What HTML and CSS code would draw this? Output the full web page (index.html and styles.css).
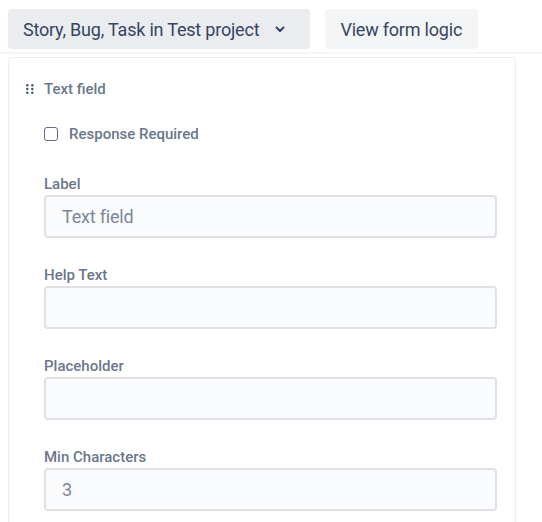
FILE: index.html
```html
<!DOCTYPE html>
<html>
<head>
<meta charset="utf-8">
<link rel="stylesheet" href="styles.css">
</head>
<body>
<div class="toolbar">
  <button class="btn btn-select">Story, Bug, Task in Test project
    <svg class="chev" width="10" height="7" viewBox="0 0 10 7"><path d="M1.5 1.5 L5 5 L8.5 1.5" fill="none" stroke="#344563" stroke-width="2" stroke-linecap="round" stroke-linejoin="round"/></svg>
  </button>
  <button class="btn btn-plain">View form logic</button>
</div>
<div class="card">
  <div class="card-head">
    <svg class="handle" width="8" height="10" viewBox="0 0 8 10"><g fill="#42526e"><circle cx="1.3" cy="1.3" r="1.2"/><circle cx="6.3" cy="1.3" r="1.2"/><circle cx="1.3" cy="5" r="1.2"/><circle cx="6.3" cy="5" r="1.2"/><circle cx="1.3" cy="8.7" r="1.2"/><circle cx="6.3" cy="8.7" r="1.2"/></g></svg>
    <span class="head-title">Text field</span>
  </div>
  <div class="card-body">
    <label class="check-row"><span class="checkbox"></span><span>Response Required</span></label>
    <div class="field">
      <div class="field-label">Label</div>
      <div class="input">Text field</div>
    </div>
    <div class="field">
      <div class="field-label">Help Text</div>
      <div class="input"></div>
    </div>
    <div class="field">
      <div class="field-label">Placeholder</div>
      <div class="input"></div>
    </div>
    <div class="field">
      <div class="field-label">Min Characters</div>
      <div class="input">3</div>
    </div>
  </div>
</div>
</body>
</html>
```
FILE: styles.css
```css
html, body {
  margin: 0;
  padding: 0;
  background: #ffffff;
  font-family: Roboto, "Liberation Sans", sans-serif;
}
.toolbar {
  display: flex;
  gap: 15px;
  padding: 9px 8px 3px;
  border-bottom: 2px solid #f4f5f7;
}
.btn {
  height: 40px;
  border: none;
  border-radius: 4px;
  font-family: Roboto, "Liberation Sans", sans-serif;
  font-size: 18px;
  letter-spacing: -0.2px;
  color: #344563;
  display: flex;
  align-items: center;
  padding: 0 15px;
}
.btn-select {
  background: #ebecf0;
  gap: 16px;
  padding-right: 25px;
}
.btn-plain {
  background: #f4f5f7;
  padding-right: 16px;
}
.chev {
  display: block;
  margin-top: 1px;
}
.card {
  margin: 3px 0 0 8px;
  border: 1px solid #ebecf0;
  border-radius: 4px;
  padding: 21px 0 0 17px;
  box-sizing: border-box;
  width: 508px;
  height: 480px;
}
.card-head {
  display: flex;
  align-items: center;
  gap: 10px;
  height: 20px;
}
.handle {
  display: block;
}
.head-title {
  font-size: 15px;
  font-weight: 500;
  color: #6b778c;
  line-height: 20px;
}
.card-body {
  padding-left: 18px;
  width: 453px;
}
.check-row {
  display: flex;
  align-items: center;
  gap: 11px;
  margin-top: 25px;
  font-size: 15px;
  font-weight: 500;
  color: #6b778c;
  height: 20px;
  line-height: 20px;
}
.checkbox {
  width: 12px;
  height: 12px;
  border: 1.5px solid #5e6c84;
  border-radius: 3px;
  background: #fff;
}
.field {
  margin-top: 29px;
}
.check-row + .field {
  margin-top: 32px;
}
.field-label {
  font-size: 15px;
  font-weight: 500;
  color: #6b778c;
  line-height: 16px;
  margin-bottom: 3px;
}
.input {
  height: 43px;
  box-sizing: border-box;
  border: 2px solid #dfe1e6;
  border-radius: 4px;
  background: #fafbfc;
  font-size: 18px;
  letter-spacing: -0.2px;
  color: #7a869a;
  display: flex;
  align-items: center;
  padding-left: 16px;
}
```
